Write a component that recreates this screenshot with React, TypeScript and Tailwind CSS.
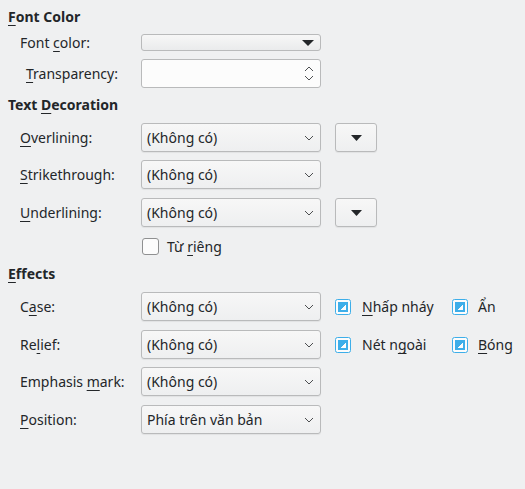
import type { ReactNode } from 'react';

const U = ({ children }: { children: ReactNode }) => (
  <span className="underline decoration-1 underline-offset-[3px]">{children}</span>
);

const Chevron = () => (
  <svg width="10" height="6" viewBox="0 0 10 6" className="shrink-0">
    <path d="M1 1 L5 5 L9 1" fill="none" stroke="#4d4f51" strokeWidth="1" />
  </svg>
);

const Triangle = ({ w = 11 }: { w?: number }) => (
  <svg width={w} height="6" viewBox={`0 0 ${w} 6`} className="shrink-0">
    <path d={`M0 0 L${w} 0 L${w / 2} 6 Z`} fill="#232629" />
  </svg>
);

function Combo({ value }: { value: string }) {
  return (
    <div className="w-[180px] h-[29px] flex items-center justify-between pl-[5px] pr-[6px] rounded-[3px] border border-[#b9babb] bg-gradient-to-b from-[#f7f7f7] to-[#eeeff0] shadow-[0_1px_1px_rgba(0,0,0,0.06)]">
      <span>{value}</span>
      <Chevron />
    </div>
  );
}

function ColorButton() {
  return (
    <div className="w-[42px] h-[29px] flex items-center justify-center rounded-[3px] border border-[#b9babb] bg-gradient-to-b from-[#f7f7f7] to-[#eeeff0] shadow-[0_1px_1px_rgba(0,0,0,0.06)]">
      <Triangle />
    </div>
  );
}

function TriCheck() {
  return (
    <svg width="16" height="16" viewBox="0 0 16 16" className="shrink-0">
      <rect x="0.5" y="0.5" width="15" height="15" rx="2" fill="#fcfcfc" stroke="#3daee9" />
      <rect x="3" y="3" width="10" height="10" fill="#3daee9" />
      <path d="M11 6 L11 11 L6 11 L6 10 L7 10 L7 9 L8 9 L8 8 L9 8 L9 7 L10 7 L10 6 Z" fill="#fcfcfc" />
    </svg>
  );
}

function Row({ label, indent = false, children, className = '' }: { label: ReactNode; indent?: boolean; children: ReactNode; className?: string }) {
  return (
    <div className={`flex items-center ${className}`}>
      <div className={`w-[133px] ${indent ? 'pl-[18px]' : 'pl-3'} leading-[18px]`}>{label}</div>
      {children}
    </div>
  );
}

export default function App() {
  return (
    <div className="w-[525px] h-[489px] bg-[#eff0f1] text-[#232629] text-[14px] font-['Noto_Sans',sans-serif] pl-2 pt-2">
      <div className="font-bold leading-[18px]"><U>F</U>ont Color</div>

      <Row label={<>Font <U>c</U>olor:</>} className="mt-2 h-[17px]">
        <div className="w-[180px] h-[17px] flex items-center justify-end pr-[6px] rounded-[3px] border border-[#b9babb] bg-gradient-to-b from-[#f7f7f7] to-[#eaebec]">
          <Triangle w={12} />
        </div>
      </Row>

      <Row label={<><U>T</U>ransparency:</>} indent className="mt-2 h-[29px]">
        <div className="w-[180px] h-[29px] flex items-center justify-end pr-[6px] rounded-[3px] border border-[#b9babb] bg-[#fcfcfc]">
          <svg width="10" height="17" viewBox="0 0 10 17">
            <path d="M1 6 L5 2 L9 6" fill="none" stroke="#4d4f51" />
            <path d="M1 11 L5 15 L9 11" fill="none" stroke="#4d4f51" />
          </svg>
        </div>
      </Row>

      <div className="font-bold leading-[18px] mt-[8px]">Text <U>D</U>ecoration</div>

      <Row label={<><U>O</U>verlining:</>} className="mt-[9px]">
        <Combo value="(Không có)" />
        <div className="ml-[14px]"><ColorButton /></div>
      </Row>

      <Row label={<><U>S</U>trikethrough:</>} className="mt-[8px]">
        <Combo value="(Không có)" />
      </Row>

      <Row label={<><U>U</U>nderlining:</>} className="mt-[9px]">
        <Combo value="(Không có)" />
        <div className="ml-[14px]"><ColorButton /></div>
      </Row>

      <div className="flex items-center mt-[11px] pl-[134px] h-[17px]">
        <div className="w-[17px] h-[17px] rounded-[3px] border border-[#8f9091] bg-[#fcfcfc]" />
        <span className="ml-[8px]">Từ <U>r</U>iêng</span>
      </div>

      <div className="font-bold leading-[18px] mt-[10px]"><U>E</U>ffects</div>

      <Row label={<>C<U>a</U>se:</>} className="mt-[9px]">
        <Combo value="(Không có)" />
        <div className="flex items-center ml-[14px]">
          <TriCheck />
          <span className="ml-[11px] w-[90px]"><U>N</U>hấp nháy</span>
          <TriCheck />
          <span className="ml-[10px]">Ẩn</span>
        </div>
      </Row>

      <Row label={<>Re<U>l</U>ief:</>} className="mt-[9px]">
        <Combo value="(Không có)" />
        <div className="flex items-center ml-[14px]">
          <TriCheck />
          <span className="ml-[11px] w-[90px]">Nét n<U>g</U>oài</span>
          <TriCheck />
          <span className="ml-[10px]"><U>B</U>óng</span>
        </div>
      </Row>

      <Row label={<>Emphasis <U>m</U>ark:</>} className="mt-[8px]">
        <Combo value="(Không có)" />
      </Row>

      <Row label={<><U>P</U>osition:</>} className="mt-[9px]">
        <Combo value="Phía trên văn bản" />
      </Row>
    </div>
  );
}
